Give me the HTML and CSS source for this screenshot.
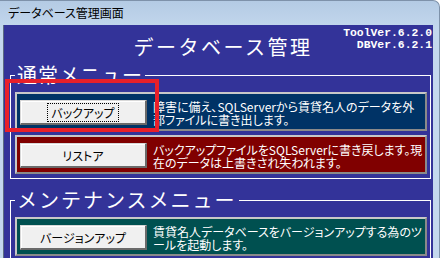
FILE: index.html
```html
<!DOCTYPE html>
<html lang="ja">
<head>
    <meta charset="UTF-8">
    <meta name="viewport" content="width=device-width, initial-scale=1.0">
    <title>データベース管理画面</title>
    <link rel="stylesheet" href="styles.css">
</head>
<body>
    <div class="window">
        <div class="title-bar">データベース管理画面</div>
        <div class="client">
            <div class="header">
                <h1 class="app-title">データベース管理</h1>
                <div class="version">ToolVer.6.2.0<br>DBVer.6.2.1</div>
            </div>

            <fieldset class="group">
                <legend>通常メニュー</legend>
                <div class="menu-row row-backup">
                    <button class="menu-button"><span class="focus">バックアップ</span></button>
                    <p>障害に備え、SQLServerから賃貸名人のデータを外<br>部ファイルに書き出します。</p>
                </div>
                <div class="menu-row row-restore">
                    <button class="menu-button">リストア</button>
                    <p>バックアップファイルをSQLServerに書き戻します。現<br>在のデータは上書きされ失われます。</p>
                </div>
            </fieldset>

            <fieldset class="group group-maint">
                <legend>メンテナンスメニュー</legend>
                <div class="menu-row row-upgrade">
                    <button class="menu-button">バージョンアップ</button>
                    <p>賃貸名人データベースをバージョンアップする為のツ<br>ールを起動します。</p>
                </div>
            </fieldset>
        </div>

        <!-- marca roja sobre el botón de copia -->
        <div class="highlight"></div>
    </div>
</body>
</html>
```

FILE: styles.css
```css
body {
    margin: 0;
    background-color: #ffffff;
    font-family: "Noto Sans CJK JP", "Noto Sans", sans-serif;
}

.window {
    position: relative;
    width: 440px;
    height: 258px;
    box-sizing: border-box;
    overflow: hidden;
    display: flex;
    flex-direction: column;
    padding: 0 6px 0 3px;
    background: linear-gradient(#b4cbe4, #c4d8ee 30px, #c4d8ee);
    border-top: 1px solid #7e92aa;
    border-right: 1px solid #7e92aa;
    border-top-right-radius: 7px;
}

.title-bar {
    height: 24px;
    line-height: 24px;
    padding-left: 5px;
    font-size: 12px;
    color: #000000;
    font-feature-settings: "palt";
}

.client {
    flex: 1;
    background-color: #333399;
    border-left: 1px solid #5b6c82;
}

.header {
    height: 38px;
    display: grid;
    grid-template-columns: 1fr auto 1fr;
}

.app-title {
    grid-column: 2;
    margin: 12px 0 0 9px;
    font-size: 20px;
    font-weight: normal;
    line-height: 20px;
    letter-spacing: 2.5px;
    color: #ffffff;
}

.version {
    grid-column: 3;
    justify-self: end;
    padding: 2px 1px 0 0;
    font-family: "Liberation Mono", monospace;
    font-weight: bold;
    font-size: 11.4px;
    line-height: 12px;
    text-align: right;
    color: #ffffff;
}

.group {
    margin: 0 2px 0 6px;
    padding: 5px 3px 4px 4px;
    border: 1px solid #ffffff;
    min-width: 0;
}

.group legend {
    padding: 0 2px;
    font-size: 20px;
    line-height: 24px;
    letter-spacing: 1px;
    color: #ffffff;
}

.group-maint {
    margin-top: 9px;
}

.group-maint legend {
    letter-spacing: 2px;
}

.menu-row {
    height: 39px;
    box-sizing: border-box;
    display: flex;
    align-items: flex-start;
    padding: 6px 0 0 3px;
    border: 2px solid;
    border-color: #c8c8c8 #8a8a8a #8a8a8a #c8c8c8;
}

.menu-row + .menu-row {
    margin-top: 4px;
}

.row-backup {
    background-color: #003366;
}

.row-restore {
    background-color: #800000;
}

.row-upgrade {
    background-color: #005050;
}

.menu-button {
    flex: none;
    width: 127px;
    height: 25px;
    padding: 0;
    box-sizing: border-box;
    background-color: #f0f0f0;
    border-style: solid;
    border-width: 1px 2px 2px 1px;
    border-color: #d8d8d8 #6a6a6a #6a6a6a #d8d8d8;
    box-shadow: inset 1px 1px 0 #ffffff;
    font-family: inherit;
    font-size: 12px;
    color: #000000;
    font-feature-settings: "palt";
}

.menu-button .focus {
    border: 1px dotted #000000;
    padding: 0 3px;
}

.menu-row p {
    margin: 0 0 0 6px;
    font-size: 12px;
    line-height: 13px;
    color: #ffffff;
    white-space: nowrap;
    font-feature-settings: "palt";
}

.highlight {
    position: absolute;
    left: 5px;
    top: 78px;
    width: 154px;
    height: 53px;
    box-sizing: border-box;
    border: 4px solid #e8202a;
}
```
